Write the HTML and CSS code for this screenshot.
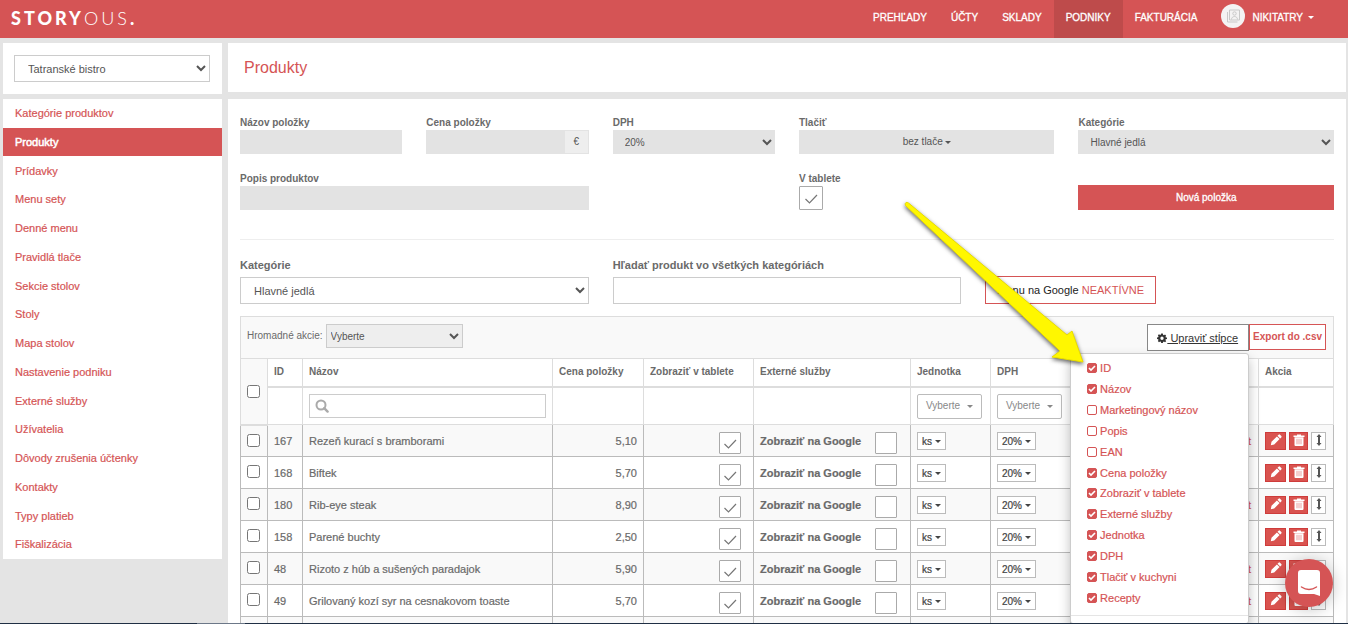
FILE: index.html
```html
<!DOCTYPE html>
<html lang="sk">
<head>
<meta charset="utf-8">
<title>Produkty</title>
<link rel="stylesheet" href="styles.css">
</head>
<body>
<svg class="sprite" aria-hidden="true">
  <symbol id="i-pencil" viewBox="0 0 12 12"><path fill="currentColor" d="M8.6.7a1 1 0 0 1 1.400 0L11.300 2a1 1 0 0 1 0 1.400L10.200 4.500 7.500 1.800zM6.900 2.400l2.700 2.700-5.400 5.400L.8 11.300l.7-3.500z"/></symbol>
  <symbol id="i-trash" viewBox="0 0 12 12"><path fill="currentColor" d="M4 1.500V.5h4v1h3.500V3H.5V1.500zM1.500 3.300h9V11a1 1 0 0 1-1 1h-7a1 1 0 0 1-1-1z"/><path stroke="#e9a09f" d="M4 4.800v5.500M6 4.800v5.500M8 4.800v5.500"/></symbol>
  <symbol id="i-move" viewBox="0 0 8 14"><path fill="currentColor" d="M4 1l2.500 3H5v6h1.500L4 13 1.500 10H3V4H1.500z"/></symbol>
  <symbol id="i-gear" viewBox="0 0 12 12"><path fill="currentColor" fill-rule="evenodd" d="M5 .7h2l.3 1.500 1 .4L9.600 1.800 11 3.200l-.8 1.200.4 1L12 5.500v1.700l-1.500.3-.4 1 .9 1.300L9.600 11.100l-1.300-.8-1 .4L7 12H5l-.3-1.400-1-.4-1.300.9L1 9.700l.8-1.300-.4-1L0 7.100V5.300l1.400-.3.4-1L1 2.800 2.400 1.500l1.300.8 1-.4zM6 4.300a2 2 0 1 0 0 4 2 2 0 0 0 0-4z"/></symbol>
</svg>

<header class="topbar">
  <a class="logo" href="#"><b>STORY</b>OUS<b>.</b></a>
  <nav class="nav">
    <a href="#">PREHĽADY</a>
    <a href="#">ÚČTY</a>
    <a href="#">SKLADY</a>
    <a class="active" href="#">PODNIKY</a>
    <a href="#">FAKTURÁCIA</a>
    <a class="user" href="#">
      <svg class="avatar" viewBox="0 0 24 24"><circle cx="12" cy="12" r="12" fill="#f4f3f3"/><g fill="none" stroke="#c9c9c9"><path d="M8.500 6h10v10h-10z"/><path d="M6.500 8v10h10"/><circle cx="13.500" cy="9.500" r="1.700"/><path d="M10.500 15.500c0-4 6-4 6 0"/></g></svg>
      <span>NIKITATRY</span><i class="caret"></i>
    </a>
  </nav>
</header>

<div class="layout">
  <aside class="sidebar">
    <div class="panel venue">
      <select class="field-lg" aria-label="Podnik"><option>Tatranské bistro</option></select>
    </div>
    <ul class="panel side-menu">
      <li><a href="#">Kategórie produktov</a></li>
      <li class="active"><a href="#">Produkty</a></li>
      <li><a href="#">Prídavky</a></li>
      <li><a href="#">Menu sety</a></li>
      <li><a href="#">Denné menu</a></li>
      <li><a href="#">Pravidlá tlače</a></li>
      <li><a href="#">Sekcie stolov</a></li>
      <li><a href="#">Stoly</a></li>
      <li><a href="#">Mapa stolov</a></li>
      <li><a href="#">Nastavenie podniku</a></li>
      <li><a href="#">Externé služby</a></li>
      <li><a href="#">Užívatelia</a></li>
      <li><a href="#">Dôvody zrušenia účtenky</a></li>
      <li><a href="#">Kontakty</a></li>
      <li><a href="#">Typy platieb</a></li>
      <li><a href="#">Fiškalizácia</a></li>
    </ul>
  </aside>

  <main class="main">
    <div class="panel title"><h1>Produkty</h1></div>
    <div class="panel content">
      <form class="grid new-item">
        <div class="s2"><label for="name">Názov položky</label><input id="name" class="field" type="text"></div>
        <div class="s2"><label for="price">Cena položky</label><div class="money"><input id="price" class="field" type="text"><span>€</span></div></div>
        <div class="s2"><label for="vat">DPH</label><select id="vat" class="field"><option>20%</option></select></div>
        <div class="s3"><label for="print">Tlačiť</label><button id="print" class="field print" type="button">bez tlače<i class="caret"></i></button></div>
        <div class="s3"><label for="cat">Kategórie</label><select id="cat" class="field"><option>Hlavné jedlá</option></select></div>
        <div class="s4"><label for="desc">Popis produktov</label><input id="desc" class="field" type="text"></div>
        <div class="s3 from7"><label for="tablet">V tablete</label><input id="tablet" class="toggle big" type="checkbox" checked></div>
        <button class="primary s3" type="button">Nová položka</button>
      </form>

      <div class="grid filters">
        <div class="s4"><label for="fcat">Kategórie</label><select id="fcat" class="field-lg"><option>Hlavné jedlá</option></select></div>
        <div class="s4"><label for="fsearch">Hľadať produkt vo všetkých kategóriách</label><input id="fsearch" class="field-lg" type="text"></div>
        <div class="s4 bottom"><button class="google" type="button">Menu na Google <span>NEAKTÍVNE</span></button></div>
      </div>

      <div class="toolbar">
        <label for="bulk">Hromadné akcie:</label>
        <select id="bulk"><option>Vyberte</option></select>
        <div class="columns">
          <button class="edit-cols" type="button"><svg class="gear"><use href="#i-gear"/></svg><u>&nbsp;Upraviť stĺpce</u></button>
          <div class="col-menu">
            <div class="col-list">
              <label><input type="checkbox" checked>ID</label>
              <label><input type="checkbox" checked>Názov</label>
              <label><input type="checkbox">Marketingový názov</label>
              <label><input type="checkbox">Popis</label>
              <label><input type="checkbox">EAN</label>
              <label><input type="checkbox" checked>Cena položky</label>
              <label><input type="checkbox" checked>Zobraziť v tablete</label>
              <label><input type="checkbox" checked>Externé služby</label>
              <label><input type="checkbox" checked>Jednotka</label>
              <label><input type="checkbox" checked>DPH</label>
              <label><input type="checkbox" checked>Tlačiť v kuchyni</label>
              <label><input type="checkbox" checked>Recepty</label>
            </div>
            <div class="col-foot"></div>
          </div>
        </div>
        <button class="export" type="button">Export do .csv</button>
      </div>

      <table class="products">
        <colgroup><col class="c-check"><col class="c-id"><col><col class="c-price"><col class="c-tablet"><col class="c-ext"><col class="c-unit"><col class="c-vat"><col class="c-recipe"><col class="c-action"></colgroup>
        <thead>
          <tr class="names"><th rowspan="2" class="all"><input type="checkbox" aria-label="Vybrať všetko"></th><th>ID</th><th>Názov</th><th>Cena položky</th><th>Zobraziť v tablete</th><th>Externé služby</th><th>Jednotka</th><th>DPH</th><th></th><th>Akcia</th></tr>
          <tr class="filter"><td></td><td><div class="search"><svg viewBox="0 0 14 14"><circle cx="6" cy="6" r="4.500" fill="none" stroke="#aaa" stroke-width="2"/><path d="M9.200 9.200l3.400 3.400" stroke="#aaa" stroke-width="2.400" stroke-linecap="round"/></svg><input type="text" aria-label="Hľadať názov"></div></td><td></td><td></td><td></td><td><button class="pick" type="button">Vyberte<i class="caret"></i></button></td><td><button class="pick" type="button">Vyberte<i class="caret"></i></button></td><td></td><td></td></tr>
        </thead>
        <tbody id="rows"></tbody>
      </table>
    </div>
  </main>
</div>

<svg class="pointer" viewBox="0 0 190 172" aria-hidden="true"><path fill="#fff700" stroke="#e8dc00" stroke-width="1" d="M6 2.500Q4.500 3.500 5.500 5.500L160 151 152 157 183 162 172 131 167 135 8.500 3Q7 2 6 2.500z"/></svg>

<button class="chat" type="button" aria-label="Chat"><svg viewBox="0 0 48 48"><path fill="#fff" d="M16 11h16a3 3 0 0 1 3 3v23l-6-2H16a3 3 0 0 1-3-3V14a3 3 0 0 1 3-3z"/><path d="M16.500 28q7.500 5 15 0" fill="none" stroke="#d55455" stroke-width="1.500" stroke-linecap="round"/></svg></button>
<div class="edge"><i></i></div>
<script src="rows.js"></script>
</body>
</html>
```
FILE: styles.css
```css
* { box-sizing: border-box; }
body {
  margin: 0;
  height: 100vh;
  overflow: hidden;
  background: #e4e4e4;
  color: #6a6a6a;
  font: 11px/14px "Liberation Sans", Arial, sans-serif;
}
a { color: inherit; text-decoration: none; }
button, input, select { font: inherit; color: inherit; margin: 0; border-radius: 0; }
input:focus { outline: none; }
.sprite { position: absolute; width: 0; height: 0; }
.panel { background: #fff; }
.caret {
  display: inline-block;
  margin-left: 2px;
  border: 3px solid transparent;
  border-top-color: currentColor;
  border-bottom: 0;
  vertical-align: middle;
}

.topbar { display: flex; justify-content: space-between; height: 38px; background: #d55455; color: #fff; }
.logo { padding-left: 11px; font: 300 18px/37px Lato, sans-serif; letter-spacing: 3px; }
.logo b { font-weight: 900; }
.nav { display: flex; padding-right: 22px; font-size: 10px; line-height: 35px; -webkit-text-stroke: 0.3px; }
.nav a { padding: 0 12px; }
.nav .active { background: #be4b4b; }
.nav .user { display: flex; align-items: center; height: 35px; }
.avatar { width: 24px; height: 24px; margin: 0 7px 3px 0; }
.nav .caret { margin-left: 5px; }

.layout { display: flex; gap: 6px; padding: 5px 2px 0 3px; }
.sidebar { flex: 0 0 219px; }
.venue { padding: 12px 12px 12px 11px; margin-bottom: 5px; }
.field-lg {
  display: block;
  width: 100%;
  height: 27px;
  padding: 0 0 0 9px;
  border: 1px solid #ccc;
  background: #fff;
  color: #555;
}
.side-menu { display: grid; grid-auto-rows: 1fr; min-height: 460px; margin: 0; padding: 0; list-style: none; color: #d55455; -webkit-text-stroke: 0.2px; }
.side-menu a { display: block; padding: 0 12px; line-height: 28px; }
.side-menu .active { color: #fff; -webkit-text-stroke: 0.5px; }
.side-menu .active a { background: #d55455; }

.main { flex: 1; min-width: 0; }
.title { padding: 0 16px; margin-bottom: 7px; }
h1 { margin: 0; font-size: 16px; font-weight: 400; line-height: 49px; color: #d55455; }
.content { padding: 17px 12px 0; }
.grid { display: grid; grid-template-columns: repeat(12, 1fr); column-gap: 24px; }
.s2 { grid-column: span 2; }
.s3 { grid-column: span 3; }
.s4 { grid-column: span 4; }
.from7 { grid-column: 7 / span 3; }
.bottom { align-self: end; }
.grid label { display: block; font-weight: 700; }

.new-item { row-gap: 18px; padding-bottom: 29px; border-bottom: 1px solid #eee; font-size: 10px; }
.new-item label { margin-bottom: 1px; font-size: 10px; line-height: 13px; }
.field { display: block; width: 100%; height: 24px; padding: 0 8px; border: 0; background: #e3e3e3; color: #555; }
.money { display: flex; }
.money span { width: 24px; flex: none; border: 1px solid #e3e3e3; border-left: 0; background: #eee; text-align: center; line-height: 22px; color: #555; }
.print { text-align: center; }
.primary { align-self: end; height: 25px; border: 0; background: #d55455; color: #fff; -webkit-text-stroke: 0.3px; }

.toggle {
  appearance: none;
  display: block;
  width: 22px;
  height: 22px;
  border: 1px solid #aaa;
  border-radius: 1px;
  background: #fff center / 16px 16px no-repeat;
}
.toggle:checked { background-image: url("data:image/svg+xml,%3Csvg xmlns='http://www.w3.org/2000/svg' viewBox='0 0 16 16'%3E%3Cpath d='M2.500 9l4 4 7.500-8' fill='none' stroke='%23777' stroke-width='1.200'/%3E%3C/svg%3E"); }
.big { width: 24px; height: 24px; }

.filters { padding: 18px 0 12px; }
.filters label { margin-bottom: 5px; }
.google { height: 28px; padding: 0 11px; border: 1px solid #d55455; background: #fff; color: #222; white-space: nowrap; }
.google span { color: #d55455; }

.toolbar {
  display: flex;
  align-items: flex-start;
  height: 42px;
  padding: 7px 7px 0 6px;
  border: 1px solid #ddd;
  border-bottom: 0;
  background: #f9f9f9;
  font-size: 10px;
}
.toolbar > label { line-height: 24px; margin-right: 3px; }
.toolbar select { width: 137px; height: 24px; border: 1px solid #ccc; background: #eee; color: #555; }
.columns { position: relative; margin-left: auto; }
.edit-cols { height: 27px; padding: 0 10px 0 9px; border: 1px solid #888; background: #fff; color: #333; font-size: 11px; }
.gear { width: 10px; height: 10px; vertical-align: -1px; }
.export { height: 26px; padding: 0 3px; border: 1px solid #d55455; background: #fff; color: #d55455; font-weight: 700; }

.col-menu {
  position: absolute;
  z-index: 2;
  top: 29px;
  right: 0;
  width: 179px;
  border: 1px solid #ccc;
  border-radius: 3px;
  background: #fff;
  box-shadow: 0 6px 12px rgba(0, 0, 0, 0.25);
}
.col-list { display: grid; grid-auto-rows: 1fr; min-height: 250px; margin: 4px 0 7px; padding-left: 16px; color: #d55455; font-size: 11px; -webkit-text-stroke: 0.2px; }
.col-list label { display: flex; align-items: center; gap: 3px; }
.col-list input { appearance: none; width: 10px; height: 10px; border: 1px solid #d55455; border-radius: 2px; background: #fff; }
.col-list input:checked { background: #d55455 url("data:image/svg+xml,%3Csvg xmlns='http://www.w3.org/2000/svg' viewBox='0 0 8 8'%3E%3Cpath d='M1 4l2 2 4-4' fill='none' stroke='white' stroke-width='1.600'/%3E%3C/svg%3E") center / 8px 8px no-repeat; }
.col-foot { height: 8px; border-top: 1px solid #e5e5e5; }

.products { width: 100%; table-layout: fixed; border-collapse: collapse; }
.c-check { width: 27px; }
.c-id { width: 35px; }
.c-price { width: 91px; }
.c-tablet { width: 110px; }
.c-ext { width: 157px; }
.c-unit, .c-vat { width: 80px; }
.c-recipe { width: 188px; }
.c-action { width: 75px; }
.products th, .products td { padding: 0 6px; border: 1px solid #ddd; text-align: left; vertical-align: top; }
.products th { height: 28px; font-size: 10px; line-height: 26px; }
.products .names th { border-bottom-width: 2px; }
.products .all { padding: 0 6px; background: #f9f9f9; border-bottom-width: 1px; vertical-align: middle; }
.all input, .sel input { display: block; width: 13px; height: 13px; }
.filter td { height: 38px; padding-top: 6px; }
.search { display: flex; align-items: center; height: 24px; padding-left: 5px; border: 1px solid #ccc; }
.search svg { width: 14px; height: 14px; flex: none; }
.search input { flex: 1; min-width: 0; height: 20px; border: 0; background: none; }
.pick { display: block; width: 65px; height: 25px; padding: 0; border: 1px solid #bbb; border-radius: 2px; background: #fff; color: #888; font-size: 10px; white-space: nowrap; }
.pick .caret { margin-left: 7px; }

.products tbody td { height: 32px; border-color: #bbb; padding-top: 7px; line-height: 18px; white-space: nowrap; }
.products tbody tr:first-child td { border-top-color: #ddd; }
.products tbody tr:nth-child(odd) { background: #f9f9f9; }
.products tbody { -webkit-text-stroke: 0.2px; }
.products .sel { padding: 8px 6px 0; }
.products .num { text-align: right; }
.products .recipe { padding-right: 7px; text-align: right; color: #d55455; }
.tablet .toggle { margin-left: auto; margin-right: 6px; }
.ext { display: flex; justify-content: space-between; height: 22px; margin-right: 7px; }
.mini { display: block; height: 18px; padding: 0 4px; border: 1px solid #bbb; background: #fff; color: #444; font-size: 10px; line-height: 15px; }
.mini .caret { margin-left: 3px; }
.actions { display: flex; gap: 3px; }
.actions button { display: flex; align-items: center; justify-content: center; width: 19px; height: 18px; padding: 0; border: 1px solid #ce3c3b; background: #d9534f; color: #fff; }
.actions button:first-child { width: 21px; }
.actions .move { width: 15px; border-color: #bbb; background: #fff; color: #555; }
.actions svg { width: 12px; height: 12px; margin-bottom: 2px; }
.actions .move svg { width: 8px; height: 14px; }

.pointer { position: absolute; z-index: 3; left: 900px; top: 200px; width: 190px; height: 172px; filter: drop-shadow(0 2px 2px rgba(0, 0, 0, 0.6)); pointer-events: none; }
.chat { position: fixed; z-index: 4; right: 15px; bottom: 17px; width: 48px; height: 48px; padding: 0; border: 0; border-radius: 50%; background: #d55455; box-shadow: 0 2px 16px rgba(0, 0, 0, 0.25); }
.chat svg { display: block; width: 48px; height: 48px; }
.edge { position: fixed; z-index: 5; left: 0; right: 0; bottom: 0; height: 1px; background: #1f2f44; }
.edge i { display: block; width: 48px; height: 1px; margin-left: 197px; background: #6c7888; }
```
FILE: rows.js
```js
const products = [
  [167, "Rezeň kurací s bramborami", "5,10", true],
  [168, "Biftek", "5,70", false],
  [180, "Rib-eye steak", "8,90", true],
  [158, "Parené buchty", "2,50", false],
  [48, "Rizoto z húb a sušených paradajok", "5,90", true],
  [49, "Grilovaný kozí syr na cesnakovom toaste", "5,70", true],
  ["", "", "", false]
];

const icon = name => `<svg><use href="#i-${name}"/></svg>`;

document.getElementById("rows").innerHTML = products.map(([id, name, price, recipe]) => id === "" ?
  `<tr>${"<td></td>".repeat(10)}</tr>` : `<tr>
  <td class="sel"><input type="checkbox" aria-label="${name}"></td>
  <td>${id}</td>
  <td>${name}</td>
  <td class="num">${price}</td>
  <td class="tablet"><input class="toggle" type="checkbox" aria-label="Zobraziť v tablete" checked></td>
  <td><label class="ext"><b>Zobraziť na Google</b><input class="toggle" type="checkbox"></label></td>
  <td><button class="mini" type="button">ks<i class="caret"></i></button></td>
  <td><button class="mini" type="button">20%<i class="caret"></i></button></td>
  <td class="recipe">${recipe ? "Recept" : ""}</td>
  <td><div class="actions">
    <button type="button" aria-label="Upraviť">${icon("pencil")}</button>
    <button type="button" aria-label="Zmazať">${icon("trash")}</button>
    <button class="move" type="button" aria-label="Presunúť">${icon("move")}</button>
  </div></td>
</tr>`).join("");
```
